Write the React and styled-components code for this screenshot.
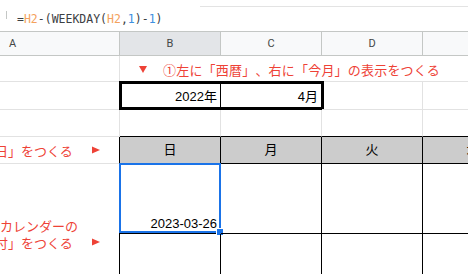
import React from "react";
import styled, { createGlobalStyle } from "styled-components";

const Global = createGlobalStyle`
  html, body { margin: 0; padding: 0; background: #fff; }
  body { font-family: "Liberation Sans", "Noto Sans CJK JP", sans-serif; overflow: hidden; }
`;

const RED = "#ee4236";
const GRID = "#e2e2e2";
const HDR = "#c4c7c5";

const Page = styled.div`
  width: 468px;
  height: 274px;
  overflow: hidden;
  position: relative;
  background: #fff;
`;

const FormulaBar = styled.div`
  box-sizing: border-box;
  height: 32px;
  border-bottom: 1px solid ${HDR};
  display: flex;
  flex-direction: column;
`;

const TopRule = styled.div`
  height: 6px;
  margin-left: 200px;
  border-bottom: 1px solid #e3e3e3;
`;

const FormulaRow = styled.div`
  display: flex;
  align-items: flex-start;
`;

const Sep = styled.div`
  width: 1px;
  height: 8px;
  margin: 4px 0 0 6px;
  background: ${HDR};
`;

const Formula = styled.div`
  margin: 5px 0 0 10px;
  font: 11.5px/15px "DejaVu Sans Mono", "Liberation Mono", monospace;
  color: #3c4043;
  white-space: nowrap;
`;

const Tok = styled.span`
  color: ${(p) => (p.$kind === "ref" ? "#f4a15d" : p.$kind === "num" ? "#3d8fe0" : "#3c4043")};
`;

const Sheet = styled.div`
  display: grid;
  grid-template-columns: 120px repeat(4, 101px);
  grid-template-rows: 24px 26px 28px 27px 27px 70px 70px;
  width: 524px;
`;

const ColHead = styled.div`
  box-sizing: border-box;
  border-right: 1px solid ${HDR};
  border-bottom: 1px solid ${HDR};
  background: ${(p) => (p.$sel ? "#e3e5e8" : "#f8f9fa")};
  display: flex;
  align-items: center;
  justify-content: ${(p) => (p.$left ? "flex-start" : "center")};
  padding-left: ${(p) => (p.$left ? "9px" : "0")};
  font: 11px "Roboto", "Liberation Sans", sans-serif;
  color: #444746;
`;

const Cell = styled.div`
  position: relative;
  box-sizing: border-box;
  min-width: 0;
  border-right: 1px solid ${(p) => p.$r || GRID};
  border-bottom: 1px solid ${(p) => p.$b || GRID};
  background: ${(p) => p.$bg || "transparent"};
  grid-column: ${(p) => p.$col || "auto"};
  grid-row: ${(p) => p.$row || "auto"};
  display: flex;
  align-items: ${(p) => p.$v || "flex-end"};
  justify-content: ${(p) => p.$h || "flex-start"};
  padding: 0 3px ${(p) => (p.$pb === undefined ? 4 : p.$pb)}px ${(p) => (p.$pl === undefined ? 3 : p.$pl)}px;
  font: 13px/16px "Liberation Sans", "Noto Sans CJK JP", sans-serif;
  color: #000;
  white-space: nowrap;
`;

const BoxedPair = styled.div`
  grid-column: 2 / 4;
  display: grid;
  grid-template-columns: 101px 101px;
  position: relative;
  &::after {
    content: "";
    position: absolute;
    top: -1px;
    left: -1px;
    right: -2px;
    bottom: 0;
    border: 3px solid #000;
    pointer-events: none;
  }
`;

const Selection = styled.div`
  position: absolute;
  top: -1px;
  left: -1px;
  right: -1px;
  bottom: 0;
  border: 2px solid #1a73e8;
  pointer-events: none;
`;

const Handle = styled.div`
  position: absolute;
  left: 97px;
  top: 65px;
  width: 6px;
  height: 6px;
  background: #1a73e8;
  box-shadow: 0 0 0 1px #fff;
`;

const Note = styled.div`
  display: flex;
  align-items: center;
  font: 13px/17px "Noto Sans CJK JP", sans-serif;
  letter-spacing: ${(p) => p.$ls || 0}px;
  text-spacing-trim: space-all;
  color: ${RED};
  white-space: nowrap;
  margin-left: ${(p) => p.$shift || 0}px;
`;

const NoteBlock = styled.div`
  display: flex;
  flex-direction: column;
`;

const TriSvg = styled.svg`
  flex: none;
  margin-left: ${(p) => p.$ml || 0}px;
  margin-right: ${(p) => p.$mr || 0}px;
`;

const Down = (props) => (
  <TriSvg width="8" height="7" viewBox="0 0 8 7" {...props}>
    <polygon points="0,0 8,0 4,7" fill={RED} />
  </TriSvg>
);

const Right = (props) => (
  <TriSvg width="8" height="8" viewBox="0 0 8 8" {...props}>
    <polygon points="0,0.5 8,4 0,7.5" fill={RED} />
  </TriSvg>
);

export default function App() {
  const black = "#000";
  return (
    <Page>
      <Global />
      <FormulaBar>
        <TopRule />
        <FormulaRow>
          <Sep />
          <Formula>
            <Tok>=</Tok>
            <Tok $kind="ref">H2</Tok>
            <Tok>-(WEEKDAY(</Tok>
            <Tok $kind="ref">H2</Tok>
            <Tok>,</Tok>
            <Tok $kind="num">1</Tok>
            <Tok>)-</Tok>
            <Tok $kind="num">1</Tok>
            <Tok>)</Tok>
          </Formula>
        </FormulaRow>
      </FormulaBar>

      <Sheet>
        <ColHead $left>A</ColHead>
        <ColHead $sel>B</ColHead>
        <ColHead>C</ColHead>
        <ColHead>D</ColHead>
        <ColHead>E</ColHead>

        {/* row 1 */}
        <Cell />
        <Cell $col="2 / 6" $pb={3} $pl={0}>
          <Note $ls={0.2}>
            <Down $ml={19} $mr={16} />
            ①左に「西暦」、右に「今月」の表示をつくる
          </Note>
        </Cell>

        {/* row 2 */}
        <Cell />
        <BoxedPair>
          <Cell $h="flex-end" $r={black}>2022年</Cell>
          <Cell $h="flex-end">4月</Cell>
        </BoxedPair>
        <Cell />
        <Cell />

        {/* row 3 */}
        <Cell />
        <Cell $b={black} />
        <Cell $b={black} />
        <Cell $b={black} />
        <Cell $b={black} />

        {/* row 4 */}
        <Cell $r={black} $v="center" $pb={0} $pl={0}>
          <Note $shift={-18}>
            曜日」をつくる
            <Right $ml={19} />
          </Note>
        </Cell>
        <Cell $r={black} $b={black} $bg="#cccccc" $v="center" $h="center" $pb={0}>日</Cell>
        <Cell $r={black} $b={black} $bg="#cccccc" $v="center" $h="center" $pb={0}>月</Cell>
        <Cell $r={black} $b={black} $bg="#cccccc" $v="center" $h="center" $pb={0}>火</Cell>
        <Cell $r={black} $b={black} $bg="#cccccc" $v="center" $h="center" $pb={0}>水</Cell>

        {/* rows 5-6 */}
        <Cell $row="6 / 8" $r={black} $v="center" $pb={0} $pl={0}>
          <NoteBlock>
            <Note>カレンダーの</Note>
            <Note $shift={-18}>
              日付」をつくる
              <Right $ml={19} />
            </Note>
          </NoteBlock>
        </Cell>
        <Cell $r={black} $b={black} $h="flex-end" $pb={1}>
          2023-03-26
          <Selection />
          <Handle />
        </Cell>
        <Cell $r={black} $b={black} />
        <Cell $r={black} $b={black} />
        <Cell $r={black} $b={black} />

        <Cell $r={black} $b={black} />
        <Cell $r={black} $b={black} />
        <Cell $r={black} $b={black} />
        <Cell $r={black} $b={black} />
      </Sheet>
    </Page>
  );
}
